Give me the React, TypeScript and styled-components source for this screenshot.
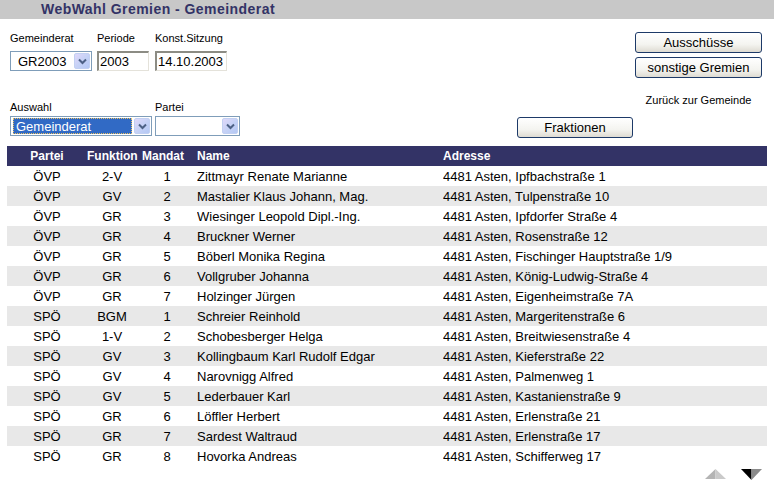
import React from "react";
import styled, { createGlobalStyle } from "styled-components";

const GlobalStyle = createGlobalStyle`
  html, body { margin: 0; padding: 0; background: #ffffff; }
  body { font-family: "Liberation Sans", Arial, sans-serif; color: #000; }
`;

const Page = styled.div`
  width: 774px;
  height: 486px;
  overflow: hidden;
  display: flex;
  flex-direction: column;
`;

const TitleBar = styled.div`
  height: 19px;
  background: #c8c8c8;
  display: flex;
  align-items: center;
  padding-left: 41px;
  margin-bottom: 1px;
`;

const Title = styled.h1`
  margin: 0;
  font-size: 14px;
  font-weight: bold;
  letter-spacing: 0.45px;
  color: #333366;
  line-height: 19px;
`;

const Form = styled.div`
  height: 126px;
  display: grid;
  grid-template-columns: 1fr 116px 127px;
  grid-template-rows: 1fr auto;
  column-gap: 2px;
  padding: 0 12px 0 10px;
`;

const FieldRow = styled.div<{ $top?: boolean }>`
  display: flex;
  align-items: flex-end;
  gap: 5px;
  padding-top: ${(p) => (p.$top ? "12px" : "0")};
  padding-bottom: ${(p) => (p.$top ? "0" : "10px")};
  align-self: ${(p) => (p.$top ? "start" : "end")};
  grid-column: 1;
`;

const Field = styled.div<{ $gap: number; $ml?: number }>`
  display: flex;
  flex-direction: column;
  gap: ${(p) => p.$gap}px;
  margin-left: ${(p) => p.$ml ?? 0}px;
`;

const Label = styled.span`
  font-size: 11px;
  line-height: 13px;
  white-space: nowrap;
`;

const SelectBox = styled.div<{ $w: number }>`
  width: ${(p) => p.$w}px;
  height: 20px;
  box-sizing: border-box;
  border: 1px solid #7f9db9;
  background: #fff;
  display: flex;
  align-items: center;
  padding: 1px 1px 1px 2px;
  gap: 2px;
`;

const SelectText = styled.div<{ $focused?: boolean }>`
  flex: 1;
  height: 100%;
  box-sizing: border-box;
  font-size: 13px;
  line-height: 15px;
  padding-left: ${(p) => (p.$focused ? "2px" : "4px")};
  color: ${(p) => (p.$focused ? "#fff" : "#000")};
  background: ${(p) => (p.$focused ? "#316ac5" : "transparent")};
  border: 1px dotted ${(p) => (p.$focused ? "#e8c060" : "transparent")};
  white-space: nowrap;
  overflow: hidden;
`;

const DropButton = styled.div`
  width: 16px;
  height: 16px;
  box-sizing: border-box;
  border-radius: 2px;
  background: linear-gradient(135deg, #e0d8fa 0%, #c6d2f6 50%, #b4c8f4 100%);
  border: 1px solid #c2d0f2;
  display: flex;
  align-items: center;
  justify-content: center;
`;

const TextInput = styled.div<{ $w: number }>`
  width: ${(p) => p.$w}px;
  height: 20px;
  box-sizing: border-box;
  border-style: solid;
  border-width: 2px 1px 1px 2px;
  border-color: #8c8c84 #e4e2da #e4e2da #8c8c84;
  background: #fff;
  font-size: 13px;
  line-height: 17px;
  padding-left: 1px;
  white-space: nowrap;
`;

const RightColumn = styled.div`
  grid-column: 3;
  grid-row: 1 / span 2;
  display: flex;
  flex-direction: column;
  align-items: stretch;
  padding-top: 12px;
`;

const Button = styled.div<{ $mt?: number }>`
  height: 21px;
  box-sizing: border-box;
  margin-top: ${(p) => p.$mt ?? 0}px;
  border: 1px solid #1d3a68;
  border-radius: 3px;
  background: linear-gradient(#ffffff 0%, #f4f4f0 60%, #dedbd2 100%);
  font-size: 13px;
  line-height: 19px;
  text-align: center;
  white-space: nowrap;
`;

const FraktionenCell = styled.div`
  grid-column: 2;
  grid-row: 2;
  align-self: end;
  padding-bottom: 8px;
`;

const BackLink = styled.div`
  margin-top: 16px;
  font-size: 11px;
  line-height: 13px;
  text-align: center;
`;

const Table = styled.table`
  margin-left: 7px;
  width: 760px;
  border-collapse: collapse;
  table-layout: fixed;
  font-size: 13px;
`;

const HeadRow = styled.tr`
  background: #333366;
  height: 20px;
`;

const Th = styled.th<{ $align: "left" | "center"; $pl?: number }>`
  color: #fff;
  font-size: 12px;
  font-weight: bold;
  text-align: ${(p) => p.$align};
  padding: 0 0 0 ${(p) => p.$pl ?? 0}px;
  height: 20px;
  line-height: 20px;
  white-space: nowrap;
`;

const Row = styled.tr<{ $odd: boolean }>`
  background: ${(p) => (p.$odd ? "#e8e8e8" : "#ffffff")};
  height: 20px;
`;

const Td = styled.td<{ $align: "left" | "center" }>`
  text-align: ${(p) => p.$align};
  padding: 1px 0 0 0;
  height: 19px;
  line-height: 19px;
  white-space: nowrap;
  overflow: hidden;
`;

const Pager = styled.div`
  display: flex;
  justify-content: flex-end;
  gap: 15px;
  padding-right: 12px;
  margin-top: 3px;
`;

const Chevron = () => (
  <svg width="9" height="7" viewBox="0 0 9 7">
    <path d="M1 1.5 L4.5 5 L8 1.5" fill="none" stroke="#4d6185" strokeWidth="2" />
  </svg>
);

const UpArrow = () => (
  <svg width="21" height="10" viewBox="0 0 21 10">
    <polygon points="0,10 10.5,0 10.5,10" fill="#b4b4b4" />
    <polygon points="10.5,0 21,10 10.5,10" fill="#cacaca" />
  </svg>
);

const DownArrow = () => (
  <svg width="21" height="11" viewBox="0 0 21 11">
    <polygon points="0,0 10.5,0 10.5,11" fill="#000" />
    <polygon points="10.5,0 21,0 10.5,11" fill="#8a8a8a" />
  </svg>
);

type Member = [string, string, string, string, string];

const members: Member[] = [
  ["ÖVP", "2-V", "1", "Zittmayr Renate Marianne", "4481 Asten, Ipfbachstraße 1"],
  ["ÖVP", "GV", "2", "Mastalier Klaus Johann, Mag.", "4481 Asten, Tulpenstraße 10"],
  ["ÖVP", "GR", "3", "Wiesinger Leopold Dipl.-Ing.", "4481 Asten, Ipfdorfer Straße 4"],
  ["ÖVP", "GR", "4", "Bruckner Werner", "4481 Asten, Rosenstraße 12"],
  ["ÖVP", "GR", "5", "Böberl Monika Regina", "4481 Asten, Fischinger Hauptstraße 1/9"],
  ["ÖVP", "GR", "6", "Vollgruber Johanna", "4481 Asten, König-Ludwig-Straße 4"],
  ["ÖVP", "GR", "7", "Holzinger Jürgen", "4481 Asten, Eigenheimstraße 7A"],
  ["SPÖ", "BGM", "1", "Schreier Reinhold", "4481 Asten, Margeritenstraße 6"],
  ["SPÖ", "1-V", "2", "Schobesberger Helga", "4481 Asten, Breitwiesenstraße 4"],
  ["SPÖ", "GV", "3", "Kollingbaum Karl Rudolf Edgar", "4481 Asten, Kieferstraße 22"],
  ["SPÖ", "GV", "4", "Narovnigg Alfred", "4481 Asten, Palmenweg 1"],
  ["SPÖ", "GV", "5", "Lederbauer Karl", "4481 Asten, Kastanienstraße 9"],
  ["SPÖ", "GR", "6", "Löffler Herbert", "4481 Asten, Erlenstraße 21"],
  ["SPÖ", "GR", "7", "Sardest Waltraud", "4481 Asten, Erlenstraße 17"],
  ["SPÖ", "GR", "8", "Hovorka Andreas", "4481 Asten, Schifferweg 17"],
];

export default function App() {
  return (
    <Page>
      <GlobalStyle />
      <TitleBar>
        <Title>WebWahl Gremien - Gemeinderat</Title>
      </TitleBar>
      <Form>
        <FieldRow $top>
          <Field $gap={6}>
            <Label>Gemeinderat</Label>
            <SelectBox $w={82}>
              <SelectText>GR2003</SelectText>
              <DropButton>
                <Chevron />
              </DropButton>
            </SelectBox>
          </Field>
          <Field $gap={6}>
            <Label>Periode</Label>
            <TextInput $w={52}>2003</TextInput>
          </Field>
          <Field $gap={6} $ml={1}>
            <Label>Konst.Sitzung</Label>
            <TextInput $w={72}>14.10.2003</TextInput>
          </Field>
        </FieldRow>
        <FieldRow>
          <Field $gap={2}>
            <Label>Auswahl</Label>
            <SelectBox $w={142}>
              <SelectText $focused>Gemeinderat</SelectText>
              <DropButton>
                <Chevron />
              </DropButton>
            </SelectBox>
          </Field>
          <Field $gap={2} $ml={-2}>
            <Label>Partei</Label>
            <SelectBox $w={85}>
              <SelectText />
              <DropButton>
                <Chevron />
              </DropButton>
            </SelectBox>
          </Field>
        </FieldRow>
        <FraktionenCell>
          <Button>Fraktionen</Button>
        </FraktionenCell>
        <RightColumn>
          <Button>Ausschüsse</Button>
          <Button $mt={4}>sonstige Gremien</Button>
          <BackLink>Zurück zur Gemeinde</BackLink>
        </RightColumn>
      </Form>
      <Table>
        <colgroup>
          <col style={{ width: 80 }} />
          <col style={{ width: 50 }} />
          <col style={{ width: 60 }} />
          <col style={{ width: 246 }} />
          <col />
        </colgroup>
        <thead>
          <HeadRow>
            <Th $align="center">Partei</Th>
            <Th $align="center">Funktion</Th>
            <Th $align="left" $pl={5}>Mandat</Th>
            <Th $align="left">Name</Th>
            <Th $align="left">Adresse</Th>
          </HeadRow>
        </thead>
        <tbody>
          {members.map((m, i) => (
            <Row key={i} $odd={i % 2 === 1}>
              <Td $align="center">{m[0]}</Td>
              <Td $align="center">{m[1]}</Td>
              <Td $align="center">{m[2]}</Td>
              <Td $align="left">{m[3]}</Td>
              <Td $align="left">{m[4]}</Td>
            </Row>
          ))}
        </tbody>
      </Table>
      <Pager>
        <UpArrow />
        <DownArrow />
      </Pager>
    </Page>
  );
}
